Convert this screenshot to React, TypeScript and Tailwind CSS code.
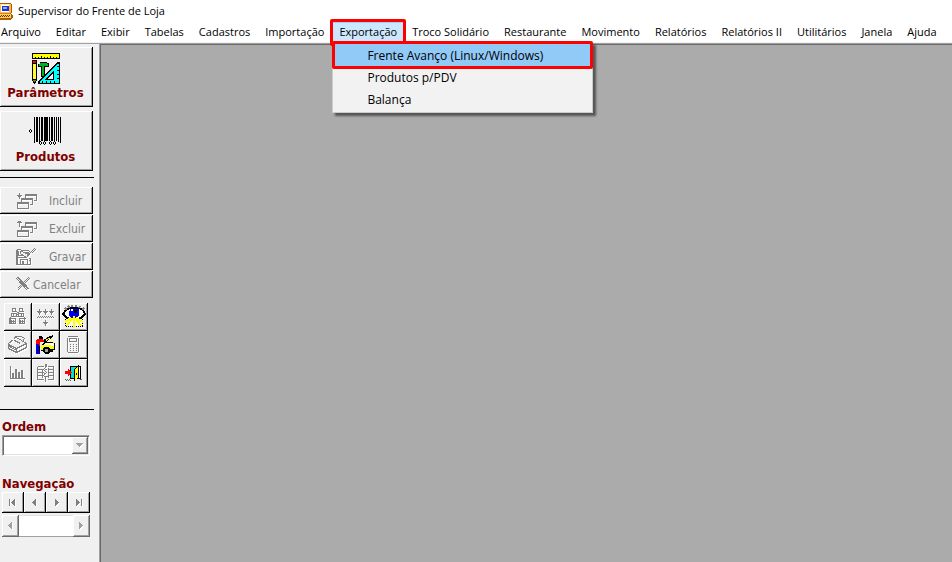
import React from 'react';

const menusBefore = ['Arquivo', 'Editar', 'Exibir', 'Tabelas', 'Cadastros', 'Importação'];
const menusAfter = [
  'Troco Solidário',
  'Restaurante',
  'Movimento',
  'Relatórios',
  'Relatórios II',
  'Utilitários',
  'Janela',
  'Ajuda',
];

const bevel =
  'bg-[#f0f0f0] shadow-[inset_-1px_-1px_#000,inset_1px_1px_#fff,inset_-2px_-2px_#a0a0a0]';
const softBevel =
  'bg-[#f0f0f0] shadow-[inset_-1px_-1px_#696969,inset_1px_1px_#fff,inset_-2px_-2px_#a0a0a0]';

interface IconProps {
  w: number;
  h: number;
  children: React.ReactNode;
}

const Icon = ({ w, h, children }: IconProps) => (
  <svg width={w} height={h} viewBox={`0 0 ${w} ${h}`} shapeRendering="crispEdges" aria-hidden="true" className="shrink-0">
    {children}
  </svg>
);

// Disabled look: grey lines with a white copy one pixel down and right
const Etched = ({ w, h, d }: { w: number; h: number; d: string }) => (
  <Icon w={w} h={h}>
    <path d={d} transform="translate(1.5 1.5)" fill="none" stroke="#fff" />
    <path d={d} transform="translate(.5 .5)" fill="none" stroke="#808080" />
  </Icon>
);

const ComputerIcon = () => (
  <Icon w={13} h={17}>
    <path d="M0 0h11v1h1v9h-1v1h1v1h1v3h-1v1h-1v1H0z" fill="#a85c00" />
    <path d="M0 1h11v9H0z" fill="#ffb83c" />
    <path d="M0 1h10v1H0z" fill="#ffe69a" />
    <path d="M1 2h8v7H1z" fill="#fff" />
    <path d="M2 3h7v5H2z" fill="#1c2ee8" />
    <path d="M3 4h4v2H3z" fill="#7cb4ff" />
    <path d="M0 11h11v4H0z" fill="#ffcf5a" />
    <path d="M1 12h1v1H1zM3 12h1v1H3zM5 12h1v1H5zM7 12h1v1H7zM9 12h1v1H9zM0 13h1v1H0zM2 13h1v1H2zM4 13h1v1H4zM6 13h1v1H6zM8 13h1v1H8z" fill="#5a3000" />
    <path d="M0 10h10v1H0z" fill="#d98a1c" />
  </Icon>
);

const ParametersIcon = () => (
  <Icon w={28} h={31}>
    <path d="M0 0h28v6H0z" />
    <path d="M1 1h26v4H1z" fill="#ff0" />
    <path d="M3 4h1v1H3zM6 4h1v1H6zM9 3h1v2H9zM12 4h1v1h-1zM15 4h1v1h-1zM18 3h1v2h-1zM21 4h1v1h-1zM24 4h1v1h-1z" />
    <path d="M0 7h5v21H4v2H3v1H2v-1H1v-2H0z" />
    <path d="M1 8h3v2H1z" fill="#f00" />
    <path d="M1 11h1v15H1zM3 11h1v15H3z" fill="#ff0" />
    <path d="M2 11h1v15H2z" fill="#fff27a" />
    <path d="M1 27h3v1H1zM2 28h1v1H2z" fill="#808000" />
    <path d="M8 9h7v1h2v4h-4v10H9V14H6v-3h2z" />
    <path d="M8 10h7v1h1v2h-4v10h-2V13H7v-2h1z" fill="#00b020" />
    <path d="M25 9h3v22H6v-3z" />
    <path d="M25 11h2v19H8v-1z" fill="#0ff" />
    <path d="M22 17v10H12z" />
    <path d="M21 20v6h-6z" fill="#f0f0f0" />
    <path d="M25 13h2v1h-2zM25 17h2v1h-2zM25 21h2v1h-2zM25 25h2v1h-2zM10 28h1v2h-1zM14 28h1v2h-1zM18 28h1v2h-1zM22 28h1v2h-1z" />
  </Icon>
);

const BarcodeIcon = () => (
  <Icon w={33} h={29}>
    <path d="M1 12h1v1H1zM0 13h1v2H0zM2 13h1v2H2zM1 15h1v1H1z" />
    <path d="M5 0h1v26H5zM7 0h2v25H7zM10 0h1v25h-1zM12 0h2v24h-2zM15 0h4v24h-4zM20 0h1v24h-1zM22 0h2v24h-2zM25 0h1v24h-1zM27 0h1v24h-1zM29 0h1v25h-1zM31 0h1v26h-1z" />
    {[10, 14, 20, 24].map((x) => (
      <path key={x} transform={`translate(${x} 24)`} d="M1 0h1v1H1zM0 1h1v2H0zM2 1h1v2H2zM1 3h1v1H1z" />
    ))}
  </Icon>
);

const stack =
  'M1 10h11v6H1zM1 11h11M5 9V6h11v6h-3M5 7h11M9 5V2h11v6h-3M9 3h11';
const includeIcon = stack + 'M3 0v6M.5 3h5M1.500 4h3';
const excludeIcon = stack + 'M3 0v6M1.500 1h3M.5 2h5';
const saveIcon =
  'M0 1h4M0 1v15h14v-6M2 2v5h3M1 1v14M4 16v-5h7v5M6 12v3M7 12v3M4 3l2-1h6l2 2-4 5-2-1-4-3zM5 3l7 3M8 4h4M9 5h3M14 4l4-4M15 5l4-4M1 9h7M12 10h2M12 12h2';
const cancelIcon = 'M1 0l11 12M2 0l11 12M0 1l11 12M12 0L1 11M13 1L1 13M11 1L3 9';

const binocularsIcon =
  'M3 0h3v3H3zM10 0h3v3h-3zM2 3h5M9 3h5M2 5h5v3H2zM9 5h5v3H9zM4 4v4M12 4v4M7 4h2M7 6h2M7 8h2M1 8v7h5V9M15 8v7h-5V9M0 9v6M0 10h6M10 10h6M0 15h6M2 11v4M4 11v4M11 11v4M13 11v4M0 13h6M10 13h5';
const sortIcon =
  'M3 0v6M.5 3h5M1.500 4h3M9 0v6M6.500 3h5M7.500 4h3M15 0v6M12.500 3h5M13.500 4h3M0 9h1M2 9h1M4 9h1M6 9h1M8 9h1M10 9h1M12 9h1M14 9h1M16 9h1M1 8h1M3 8h1M5 8h1M7 8h1M9 8h1M11 8h1M13 8h1M15 8h1M9 11v6M6.500 14h5M7.500 15h3';
const printerIcon =
  'M0 8l5-4 2-3h6l3 2-2 3 5 2M0 8v5l8 4 10-5V7M0 9l8 4 10-5M8 13v4M6 5l6 3M7 2l7 3M1 11l7 4';
const calculatorIcon =
  'M1 0h10M1 1v14M12 1v14M1 16h10M3 2h7v3H3zM3 8h1M6 8h1M9 8h1M3 10h1M6 10h1M9 10h1M3 12h1M6 12h1M9 12h1M3 14h1M6 14h1M9 14h1';
const chartIcon =
  'M1 0v13h14M0 3h1M0 6h1M0 9h1M3 13V7M4 13V7M6 13V3M7 13V3M9 13V6M10 13V6M12 13V4M13 13V4';
const tableIcon =
  'M0 3h6M10 3h6M0 3v13h6M16 3v13h-6M0 6h6M0 9h6M0 12h6M10 6h6M10 9h6M10 12h6M9 0v3L6 6l3 3-3 3 2 2v4M8 0v3M7 7l3-2M7 10l3-1M7 13h3M5 5v9M11 4v10';

const EyeIcon = () => (
  <Icon w={24} h={24}>
    <path d="M3 12h18v9H3z" fill="#fff" />
    <path d="M3.500 12.500h17v9h-17z" fill="none" stroke="#000" strokeDasharray="1 1" />
    <path d="M1 9l3-4 4-2h9l4 2 2 4-4 5H6z" fill="#fff" />
    <path d="M8 3h9v7l-2 3H9l-2-3z" fill="#0000f0" />
    <path d="M12 5h3v3h-3z" />
    <path d="M9 4h2v2H9z" fill="#fff" />
    <path d="M1 9l3-4 4-2h9l4 2 2 4M1 9l3 3 3 2M23 9l-3 3-3 2" fill="none" stroke="#000" strokeWidth="2" />
    <path d="M3 3l2 2M6 1l2 2M10 0v2M14 0v2M18 1l-1 2M22 3l-2 2" stroke="#808080" strokeWidth="2" />
    <path d="M11.500 11v12M10 13l-5 8M13 13l6 8M9 13l-6 4M14 13l7 4M8 14h8" stroke="#ff0" strokeWidth="2" />
  </Icon>
);

const CarIcon = () => (
  <Icon w={20} h={19}>
    <path d="M6 6l6-4 5-2v2l-7 5z" />
    <path d="M9 5l4-2 3-1-6 4z" fill="#ff0" />
    <path d="M5 10l4-3h8l2 2v6h-2v2h-4v-1H5z" />
    <path d="M6 11l4-3h6l2 2v1z" fill="#fff" />
    <path d="M5 10h8l4 1 1 1v2h-4v1H5z" fill="#ff0" />
    <path d="M8 12h5l1 2v3l-2 2H9l-2-2v-3z" />
    <path d="M9 14h3v3H9z" fill="#a0a0a0" />
    <path d="M17 6h1v3h-1zM15 4h1v2h-1z" fill="#ff0" />
    <path d="M3 1h3v1h1v2H3z" />
    <path d="M1 4h4l3 1v2H4v4H0V5z" fill="#f00" />
    <path d="M0 9h3v9h1v1H0z" fill="#0000e0" />
    <path d="M3 11h1v7H3z" />
  </Icon>
);

const DoorIcon = () => (
  <Icon w={17} h={16}>
    <path d="M5 1h11v13H5z" />
    <path d="M6 2h9v11H6z" fill="#fff" />
    <path d="M6 2h5v11H6z" fill="#00e0e0" />
    <path d="M9 4l5-4v13l-5 3z" />
    <path d="M10 4l3-2v11l-3 2z" fill="#ff0" />
    <path d="M11 8h1v2h-1z" />
    <path d="M0 6h3V4h1l3 3.500L4 11H3V9H0z" fill="#f00" />
    <path d="M0 14h1v1H0zM2 14h1v1H2zM4 14h1v1H4zM1 15h1v1H1zM3 15h1v1H3zM5 15h1v1H5zM15 14h2v1h-2z" fill="#606060" />
  </Icon>
);

const actions = [
  { label: 'Incluir', icon: <Etched w={22} h={18} d={includeIcon} />, cls: 'gap-[11px]' },
  { label: 'Excluir', icon: <Etched w={22} h={18} d={excludeIcon} />, cls: 'gap-[11px]' },
  { label: 'Gravar', icon: <Etched w={22} h={18} d={saveIcon} />, cls: 'gap-[11px]' },
  { label: 'Cancelar', icon: <Etched w={16} h={15} d={cancelIcon} />, cls: 'gap-px' },
];

const tools = [
  { label: 'Localizar', icon: <Etched w={18} h={18} d={binocularsIcon} /> },
  { label: 'Ordenar', icon: <Etched w={19} h={18} d={sortIcon} /> },
  { label: 'Visualizar', icon: <EyeIcon /> },
  { label: 'Imprimir', icon: <Etched w={20} h={19} d={printerIcon} /> },
  { label: 'Oficina', icon: <CarIcon /> },
  { label: 'Calculadora', icon: <Etched w={15} h={18} d={calculatorIcon} /> },
  { label: 'Gráfico', icon: <Etched w={17} h={15} d={chartIcon} /> },
  { label: 'Tabela', icon: <Etched w={18} h={20} d={tableIcon} /> },
  { label: 'Sair', icon: <DoorIcon /> },
];

const navigation = [
  { label: 'Primeiro', d: 'M0 0h1v7H0zM6 0v7L2 3.500z' },
  { label: 'Anterior', d: 'M5 0v7L1 3.500z' },
  { label: 'Próximo', d: 'M2 0v7l4-3.500z' },
  { label: 'Último', d: 'M1 0v7l4-3.500zM6 0h1v7H6z' },
];

const MenuItem = ({ label }: { label: string }) => (
  <button className="h-full px-[7px] pt-px whitespace-nowrap hover:bg-[#cce8ff]">{label}</button>
);

const ExportMenu = () => (
  <div className="relative h-full">
    <button className="h-full border border-b-0 border-[#99d1ff] bg-[#cce8ff] px-[6px]">Exportação</button>
    <span className="pointer-events-none absolute -inset-x-[2px] -top-[3px] -bottom-[4px] z-10 rounded-xs border-3 border-[#fe0000]" />
    <div className="absolute top-full left-0 z-20 w-[261px] border border-[#ccc] bg-[#f2f2f2] pt-px pb-[2px] text-[12px] shadow-[3px_3px_2px_rgba(0,0,0,0.5)]">
      <div className="relative">
        <button className="block h-[22px] w-full bg-[#91c9f7] pt-px pl-[34px] text-left leading-[22px]">
          Frente Avanço (Linux/Windows)
        </button>
        <span className="pointer-events-none absolute -inset-x-px -inset-y-[3px] rounded-xs border-3 border-[#fe0000]" />
      </div>
      <button className="block h-[22px] w-full pt-px pl-[34px] text-left leading-[22px]">Produtos p/PDV</button>
      <button className="block h-[22px] w-full pt-px pl-[34px] text-left leading-[22px]">Balança</button>
    </div>
  </div>
);

const Sidebar = () => (
  <aside className="w-[99px] shrink-0 border-t border-[#a0a0a0] pt-[3px] font-['DejaVu_Sans_Condensed','DejaVu_Sans',sans-serif]">
    <div className="flex w-[93px] flex-col gap-1 text-[13px] leading-4 font-bold text-[#800000]">
      <button className={`flex h-[60px] flex-col items-center justify-center gap-px pr-[2px] ${bevel}`}>
        <ParametersIcon />
        Parâmetros
      </button>
      <button className={`flex h-[60px] flex-col items-center justify-center gap-[3px] pr-[2px] ${bevel}`}>
        <BarcodeIcon />
        Produtos
      </button>
    </div>

    <hr className="mt-[6px] mr-[5px] border-black" />

    <div className="mt-[9px] flex w-[93px] flex-col gap-px text-[12px] text-[#808080]">
      {actions.map((a) => (
        <button key={a.label} className={`flex h-[27px] items-center pl-4 ${a.cls} ${bevel}`}>
          {a.icon}
          {a.label}
        </button>
      ))}
    </div>

    <div className="mt-[5px] ml-1 grid w-[84px] grid-cols-3">
      {tools.map((t) => (
        <button key={t.label} aria-label={t.label} className={`flex h-7 items-center justify-center pr-px pb-px ${bevel}`}>
          {t.icon}
        </button>
      ))}
    </div>

    <hr className="mt-[22px] mr-[5px] border-black" />

    <div className="mt-[9px] ml-[2px] w-[88px]">
      <label htmlFor="ordem" className="block text-[13px] leading-4 font-bold text-[#800000]">
        Ordem
      </label>
      <div className="relative">
        <select
          id="ordem"
          className="block h-[21px] w-full appearance-none border border-[#a0a0a0] border-r-white border-b-white bg-white shadow-[inset_1px_1px_#696969,inset_-1px_-1px_#e3e3e3]"
        />
        <span className={`pointer-events-none absolute top-[2px] right-[2px] flex h-[17px] w-4 items-center justify-center ${softBevel}`}>
          <Icon w={8} h={5}>
            <path d="M1 1h7L4.500 5z" fill="#fff" />
            <path d="M0 0h7L3.500 4z" fill="#a0a0a0" />
          </Icon>
        </span>
      </div>

      <p className="mt-5 text-[13px] leading-4 font-bold text-[#800000]">Navegação</p>
      <div className="grid grid-cols-4">
        {navigation.map((n) => (
          <button key={n.label} aria-label={n.label} className={`flex h-[21px] items-center justify-center ${bevel}`}>
            <Icon w={8} h={8}>
              <path d={n.d} transform="translate(1 1)" fill="#fff" />
              <path d={n.d} fill="#808080" />
            </Icon>
          </button>
        ))}
      </div>
      <div className="mt-[2px] flex h-[22px] bg-white shadow-[inset_0_1px_#e3e3e3,inset_0_-1px_#a0a0a0]">
        <button aria-label="Rolar para a esquerda" className={`flex w-[17px] items-center justify-center ${softBevel}`}>
          <Icon w={6} h={8}>
            <path d="M5 1v7L1 4.500z" fill="#fff" />
            <path d="M4 0v7L0 3.500z" fill="#a0a0a0" />
          </Icon>
        </button>
        <button aria-label="Rolar para a direita" className={`ml-auto flex w-[17px] items-center justify-center ${softBevel}`}>
          <Icon w={6} h={8}>
            <path d="M1 1v7l4-3.500z" fill="#fff" />
            <path d="M0 0v7l4-3.500z" fill="#a0a0a0" />
          </Icon>
        </button>
      </div>
    </div>
  </aside>
);

export default function App() {
  return (
    <div className="flex min-h-screen flex-col overflow-hidden bg-[#f0f0f0] font-['Open_Sans',sans-serif] text-[11px] text-black">
      <header className="bg-white">
        <div className="flex h-[22px] items-center gap-[5px] pt-px">
          <ComputerIcon />
          <h1>Supervisor do Frente de Loja</h1>
        </div>
        <nav className="flex h-[21px] border-b border-[#f0f0f0]">
          <div className="-ml-[6px] flex h-full gap-px">
            {menusBefore.map((m) => (
              <MenuItem key={m} label={m} />
            ))}
            <ExportMenu />
            {menusAfter.map((m) => (
              <MenuItem key={m} label={m} />
            ))}
          </div>
        </nav>
      </header>
      <div className="flex flex-1">
        <Sidebar />
        <main className="flex-1 border-t border-l border-[#a0a0a0] bg-[#ababab] shadow-[inset_1px_1px_#696969]" />
      </div>
    </div>
  );
}
